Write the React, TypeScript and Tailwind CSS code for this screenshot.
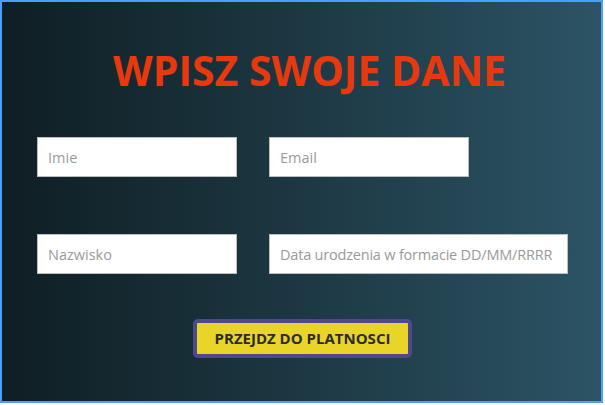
import React from 'react';

export default function App() {
  return (
    <div className="w-[605px] h-[405px] bg-white">
      <div className="w-[603px] h-[403px] border-2 border-[#4a9eff] bg-gradient-to-r from-[#0f1e24] to-[#2c5465] font-['Open_Sans',sans-serif]">
        {/* Heading */}
        <h1 className="pt-[44px] pl-[16px] text-center text-[41px] leading-[48px] font-bold text-[#e8380d]">
          WPISZ SWOJE DANE
        </h1>

        {/* Form */}
        <form className="mt-[43px] pl-[35px] flex flex-col gap-[57px]">
          <div className="flex gap-[32px]">
            <input
              placeholder="Imie"
              className="w-[200px] h-[40px] bg-white border border-[#bdbdbd] px-[10px] text-[14.5px] text-[#333] placeholder:text-[#9a9a9a] outline-none"
            />
            <input
              placeholder="Email"
              className="w-[200px] h-[40px] bg-white border border-[#bdbdbd] px-[10px] text-[14.5px] text-[#333] placeholder:text-[#9a9a9a] outline-none"
            />
          </div>
          <div className="flex gap-[32px]">
            <input
              placeholder="Nazwisko"
              className="w-[200px] h-[40px] bg-white border border-[#bdbdbd] px-[10px] text-[14.5px] text-[#333] placeholder:text-[#9a9a9a] outline-none"
            />
            <input
              placeholder="Data urodzenia w formacie DD/MM/RRRR"
              className="w-[299px] h-[40px] bg-white border border-[#bdbdbd] pl-[10px] pr-[4px] text-[14.5px] tracking-[-0.2px] text-[#333] placeholder:text-[#9a9a9a] outline-none"
            />
          </div>
        </form>

        {/* Submit */}
        <div className="mt-[45px] flex justify-center pl-[2px]">
          <button className="w-[219px] h-[39px] rounded-[5px] border-[4px] border-[#4d4a8c] bg-[#e9d52a] text-[15px] font-bold text-[#2b2b2b]">
            PRZEJDZ DO PLATNOSCI
          </button>
        </div>
      </div>
    </div>
  );
}
